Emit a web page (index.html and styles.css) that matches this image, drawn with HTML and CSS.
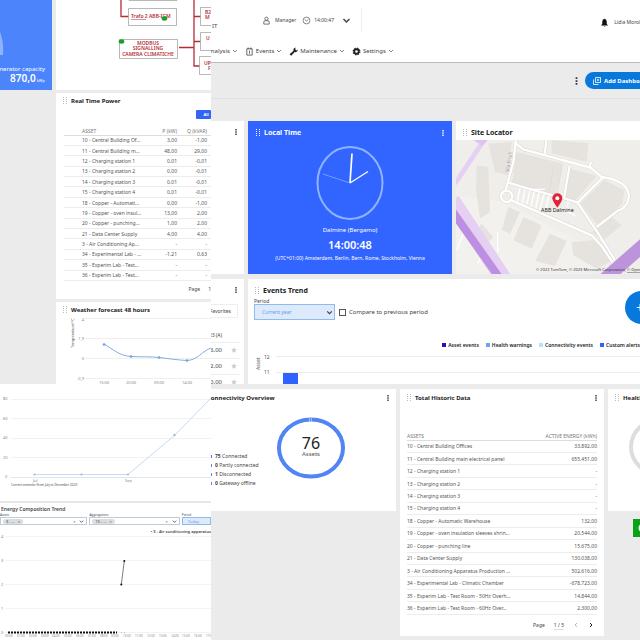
FILE: index.html
```html
<!DOCTYPE html>
<html lang="en">
<head>
<meta charset="utf-8">
<meta name="viewport" content="width=device-width, initial-scale=1">
<title>Energy dashboards</title>
<link rel="stylesheet" href="styles.css">
</head>
<body>
<svg class="defs" aria-hidden="true">
  <symbol id="grip" viewBox="0 0 4 8"><path d="M0 0h1v1H0zM3 0h1v1H3zM0 2h1v1H0zM3 2h1v1H3zM0 4h1v1H0zM3 4h1v1H3zM0 6h1v1H0zM3 6h1v1H3z" fill="currentColor"/></symbol>
  <symbol id="dots" viewBox="0 0 2 8"><path d="M.3 1h1.4v1.4H.3zM.3 3.3h1.4v1.4H.3zM.3 5.6h1.4V7H.3z" fill="currentColor"/></symbol>
  <symbol id="chev" viewBox="0 0 6 6"><path d="M1 2l2 2 2-2" fill="none" stroke="currentColor"/></symbol>
  <symbol id="star" viewBox="0 0 10 10"><path d="M5 .5l1.400 3 3.300.4-2.400 2.200.6 3.300L5 7.800 2.100 9.400l.6-3.300L.3 3.900l3.300-.4z" fill="#ccc"/></symbol>
</svg>
<main class="board">

  <section class="power">
    <article class="capacity">
      <svg class="capacity-arc" viewBox="0 0 52 90" aria-hidden="true"><path d="M0 32Q4 42 3 55H-4V32z" fill="#8db3fd"/></svg>
      <p>Generator capacity</p>
      <p class="capacity-value"><b>870,0</b> kWp</p>
    </article>
    <article class="card network">
      <svg viewBox="56 0 155 90" preserveAspectRatio="xMinYMin slice">
        <g fill="none" stroke="#b52c35" stroke-width="1.300"><path d="M121 0V16.500h8M199 0"/><path d="M194 0V66h6M194 16.500h7M194 41.500h7M179 47.500h15"/></g>
        <g fill="#fff" stroke="#999" stroke-width=".7"><path d="M129-6h48V.5h-48zM128.500 8.500h48v17h-48zM119.500 39.500h58v19h-58zM200.500-4.500H215v4h-14.500zM200.500 7.500H215v18h-14.500zM200.500 32.500H215v18h-14.500zM199.500 56.500H215v18h-15.500z"/></g>
        <g class="node-text"><text x="131" y="18">Trafo 2 ABB-IGM</text><text x="148" y="45" text-anchor="middle">MODBUS</text><text x="148" y="50" text-anchor="middle">SIGNALLING</text><text x="148" y="56" text-anchor="middle">CAMERA CLIMATICHE</text><text x="205" y="14">B2</text><text x="205" y="19">M</text><text x="206" y="40">U</text><text x="204" y="65">UP</text><text x="208" y="70">F</text></g>
        <path d="M131 19.500h15" stroke="#b52c35" stroke-width=".5"/>
        <g fill="#16a02c"><ellipse cx="164.500" cy="18.500" rx="2.800" ry="2.200"/><ellipse cx="121.500" cy="41.500" rx="2.800" ry="2.200"/></g>
      </svg>
    </article>
    <article class="card realtime">
      <header class="title"><svg class="grip"><use href="#grip"/></svg><h2>Real Time Power</h2></header>
      <div class="action"><button type="button">All</button></div>
      <table class="data">
        <thead><tr><th>ASSET</th><th>P (kW)</th><th>Q (kVAR)</th></tr></thead>
        <tbody>
          <tr><td>10 - Central Building Of...</td><td>3,00</td><td>-1,00</td></tr>
          <tr><td>11 - Central Building m...</td><td>48,00</td><td>29,00</td></tr>
          <tr><td>12 - Charging station 1</td><td>0,01</td><td>-0,01</td></tr>
          <tr><td>13 - Charging station 2</td><td>0,00</td><td>-0,01</td></tr>
          <tr><td>14 - Charging station 3</td><td>0,01</td><td>-0,01</td></tr>
          <tr><td>15 - Charging station 4</td><td>0,01</td><td>-0,01</td></tr>
          <tr><td>18 - Copper - Automati...</td><td>0,00</td><td>-1,00</td></tr>
          <tr><td>19 - Copper - oven insul...</td><td>13,00</td><td>2,00</td></tr>
          <tr><td>20 - Copper - punching...</td><td>1,00</td><td>2,00</td></tr>
          <tr><td>21 - Data Center Supply</td><td>4,00</td><td>4,00</td></tr>
          <tr><td>3 - Air Conditioning Ap...</td><td>-</td><td>-</td></tr>
          <tr><td>34 - Experimental Lab - ...</td><td>-1,21</td><td>0,63</td></tr>
          <tr><td>35 - Experim Lab - Test...</td><td>-</td><td>-</td></tr>
          <tr><td>36 - Experim Lab - Test...</td><td>-</td><td>-</td></tr>
        </tbody>
      </table>
      <footer class="pager"><span>Page</span><span>1</span></footer>
    </article>
    <article class="card weather">
      <header class="title"><svg class="grip"><use href="#grip"/></svg><h2>Weather forecast 48 hours</h2></header>
      <svg class="chart" viewBox="56 318 155 66" preserveAspectRatio="xMinYMin slice">
        <path d="M85 318.500h126M85 338.500h126M85 358.500h126M85 378.500h126" stroke="#e8e8e8" stroke-width=".7"/>
        <path d="M104 344C114 350 120 356 131 356.500S150 356.500 159 357.500S177 360 187 360.500C198 360 202 351 211 348" fill="none" stroke="#84aedd"/>
        <g fill="#6ea4e0"><circle cx="104" cy="344.500" r="1.300"/><circle cx="131" cy="356.500" r="1.300"/><circle cx="159" cy="357.500" r="1.300"/><circle cx="187" cy="360.500" r="1.300"/></g>
        <g class="tick"><text x="84" y="321" text-anchor="end">4</text><text x="84" y="340" text-anchor="end">1,9</text><text x="84" y="360" text-anchor="end">0</text><text x="84" y="380" text-anchor="end">-0,9</text><text x="104" y="384" text-anchor="middle">15:00</text><text x="131" y="384" text-anchor="middle">20:00</text><text x="159" y="384" text-anchor="middle">09:00</text><text x="187" y="384" text-anchor="middle">14:00</text></g>
        <text class="tick upright" x="74" y="348" transform="rotate(-90 74 348)">Temperature(°C)</text>
      </svg>
    </article>
  </section>

  <section class="main">
    <header class="top">
      <div class="account">
        <span class="lang">IT</span>
        <a href="#user" class="item user"><svg class="ico" viewBox="0 0 8 10"><circle cx="4" cy="3" r="1.800" fill="none" stroke="#444" stroke-width=".8"/><path d="M1 9V6.500Q1 5.300 2.300 5.300h3.400Q7 5.300 7 6.500V9z" fill="none" stroke="#444" stroke-width=".8"/></svg>Manager</a>
        <span class="item clock"><svg class="ico" viewBox="0 0 10 10"><circle cx="5" cy="5" r="3.800" fill="none" stroke="#444" stroke-width=".7"/><path d="M3 4l2 1.500L7 4" fill="none" stroke="#444" stroke-width=".7"/></svg>14:00:47</span>
        <button type="button" class="icon-button" aria-label="Open clock"><svg class="ico"><use href="#chev"/></svg></button>
        <span class="person"><svg class="ico" viewBox="0 0 10 12"><path d="M5 1Q8 1.500 8 5v3l1.500 1.500v.5h-9v-.5L2 8V5q0-3.500 3-4zM3.800 10.500h2.400Q5 12 3.800 10.500z" fill="#111"/></svg>Lidia Morolli</span>
      </div>
      <nav class="menu">
        <a href="#analysis">Analysis<svg class="down"><use href="#chev"/></svg></a>
        <a href="#events"><svg class="ico" viewBox="0 0 8 10"><path d="M1 2h6v7H1zM2.500 .5v2M5.500 .5v2M4 4v3.500" fill="none" stroke="#333" stroke-width=".8"/></svg>Events<svg class="down"><use href="#chev"/></svg></a>
        <a href="#maintenance"><svg class="ico" viewBox="0 0 8 8"><path d="M.5 6.500L4 3.300Q3.500 1 6 .5L5.500 2l1 1L8 2.500Q7.500 5 5 4.500L2 7.800z" fill="#222"/></svg>Maintenance<svg class="down"><use href="#chev"/></svg></a>
        <a href="#settings"><svg class="ico" viewBox="0 0 8 8"><circle cx="4" cy="4" r="2" fill="none" stroke="#222" stroke-width="1.600"/><circle cx="4" cy="4" r="3" fill="none" stroke="#222" stroke-dasharray="1.360 1"/></svg>Settings<svg class="down"><use href="#chev"/></svg></a>
      </nav>
    </header>
    <div class="toolbar">
      <button type="button" class="icon-button" aria-label="More"><svg class="kebab big"><use href="#dots"/></svg></button>
      <button type="button" class="add"><svg viewBox="0 0 8 8"><path d="M2.500.5h5v5h-5zM.5 2.500v5h5M5 1.800v2.400M3.800 3h2.400" fill="none" stroke="#fff" stroke-width=".8"/></svg>Add Dashboard</button>
    </div>
    <div class="tiles">
      <article class="card strip"><button type="button" class="icon-button" aria-label="More"><svg class="kebab"><use href="#dots"/></svg></button></article>
      <article class="time">
        <header class="title tall"><svg class="grip"><use href="#grip"/></svg><h2>Local Time</h2><button type="button" class="icon-button" aria-label="More"><svg class="kebab"><use href="#dots"/></svg></button></header>
        <svg class="dial" viewBox="0 0 68 76"><ellipse cx="34" cy="38" rx="32.500" ry="36" fill="none" stroke="#8db4ff" stroke-width="2"/><path d="M34 38L36 8.500" stroke="#fff" stroke-width="1.700"/><path d="M34 38l18-11.500" stroke="#fff" stroke-width="1.300"/><path d="M34 38L7 29" stroke="#8db4ff" stroke-width=".7"/></svg>
        <p>Dalmine (Bergamo)</p>
        <p class="now">14:00:48</p>
        <p class="zone">(UTC+01:00) Amsterdam, Berlin, Bern, Rome, Stockholm, Vienna</p>
      </article>
      <article class="card site">
        <header class="title tall"><svg class="grip"><use href="#grip"/></svg><h2>Site Locator</h2></header>
        <svg class="map" viewBox="33 64 552 405" preserveAspectRatio="xMinYMin slice">
          <path fill="#efeeea" d="M0 0h800v600H0z"/>
          <path fill="#f3f1ee" d="M33 230L180 250 500 420 430 469H33z"/>
          <g fill="#e6e3df"><path d="M130 75l70-5-10 100-40-10zM215 100l140 35-25 105-130-42zM375 150l80 22-65 75-30-12zM478 185l60 30-5 40-75 65-52-66zM95 140l35 5 5 135-30 20-12-90zM320 64l110 10-5 55-105-25zM190 265l35 15-30 65-25-12zM235 295l55 25-30 70-55-25zM315 345l50 22-35 75-60-15zM380 370l65-5 60 60-50 25-70-40zM440 340l60-45 30 25-55 45zM110 315l35 40-20 20-35-35z"/></g>
          <g fill="none" stroke="#dcd8d3" stroke-width="2"><path d="M326 140l-15 90M350 147l-15 90"/></g>
          <g fill="none" stroke="#dad6d1" stroke-width="10" stroke-linejoin="round"><path d="M213 64L205 130 181 218M208 70L235 92 440 148M304 64l-5 45M438 130l-5 18M438 148L470 175Q550 185 552 235 545 270 520 275L455 325M374 140l-17 98M190 192l60 18 110 30 38 12 78-78M398 252L460 345 510 425M200 245l240 105 30 32 40 60"/><circle cx="185" cy="233" r="17"/></g>
          <g fill="none" stroke="#fff" stroke-width="7" stroke-linejoin="round"><path d="M213 64L205 130 181 218M208 70L235 92 440 148M304 64l-5 45M438 130l-5 18M438 148L470 175Q550 185 552 235 545 270 520 275L455 325M374 140l-17 98M190 192l60 18 110 30 38 12 78-78M398 252L460 345 510 425M200 245l240 105 30 32 40 60"/><circle cx="185" cy="233" r="17"/></g>
          <g fill="none" stroke="#fff" stroke-width="4"><path d="M225 208l-8 40M240 212l-8 42M255 215l-10 43M268 218l-10 46M282 220l-10 50M298 225l-14 50M312 230l-12 50M250 212h50M158 340v60M54 345l-18 48M110 410l-12 25M360 275l30 15M370 250l-6 20"/></g>
          <g fill="none"><path d="M120 60L30 195" stroke="#e5cff5" stroke-width="14"/><path d="M85 64l45-2-18 20z" fill="#dfc2f2"/><path d="M20 245L175 480" stroke="#e5d0f3" stroke-width="50"/><path d="M20 275L165 480" stroke="#bd8fe2" stroke-width="24"/><path d="M475 485L600 375" stroke="#bc94dc" stroke-width="40"/></g>
          <text x="192" y="160" font-size="15" fill="#999" transform="rotate(-80 192 160)">Via Friuli</text>
          <path d="M337 267Q322 247 322 239a15 15 0 0 1 30 0q0 8-15 28z" fill="#df2438"/><circle cx="337" cy="239" r="6" fill="#fff"/>
          <text x="337" y="281" font-size="16" text-anchor="middle" fill="#222">ABB Dalmine</text>
          <text x="273" y="457" font-size="12" fill="#333">© 2022 TomTom, © 2023 Microsoft Corporation, <tspan text-decoration="underline">© OpenStreetMap</tspan></text>
        </svg>
      </article>
      <article class="card strip favorites">
        <button type="button" class="icon-button" aria-label="More"><svg class="kebab"><use href="#dots"/></svg></button>
        <button type="button" class="fav">Favorites</button>
        <table>
          <thead><tr><th>I3 (A)</th><th></th></tr></thead>
          <tbody><tr><td>16,00</td><td><svg><use href="#star"/></svg></td></tr><tr><td>12,00</td><td><svg><use href="#star"/></svg></td></tr><tr><td>10,00</td><td><svg><use href="#star"/></svg></td></tr></tbody>
        </table>
      </article>
      <article class="card events">
        <header class="title tall"><svg class="grip"><use href="#grip"/></svg><h2>Events Trend</h2></header>
        <label class="period-label" for="period">Period</label>
        <div class="filters">
          <span class="select"><select id="period"><option>Current year</option></select><svg><use href="#chev"/></svg></span>
          <label class="check"><input type="checkbox">Compare to previous period</label>
        </div>
        <ul class="legend"><li class="c1">Asset events</li><li class="c2">Health warnings</li><li class="c3">Connectivity events</li><li class="c4">Custom alerts</li></ul>
        <svg class="chart" viewBox="248 350 392 34" preserveAspectRatio="xMinYMin slice">
          <path d="M276 356.500h364M276 372.500h364" stroke="#eee"/><path d="M283 373h15v11h-15z" fill="#2f62ff"/>
          <g class="axis"><text x="264" y="359">12</text><text x="264" y="374">11</text><text x="260" y="370" transform="rotate(-90 260 370)">Asset</text></g>
        </svg>
        <button type="button" class="fab" aria-label="Add widget">+</button>
      </article>
    </div>
  </section>

  <section class="trends">
    <svg class="chart line" viewBox="0 384 211 117" preserveAspectRatio="xMinYMin slice">
      <path d="M11 399.500h200M11 418.500h200M11 438.500h200M11 457.500h200" stroke="#f2f2f2"/><path d="M11 477.500h200" stroke="#dfe6ef"/>
      <path d="M34 474.500h94L175 435 211 398" fill="none" stroke="#c9daf4"/>
      <g fill="#a8bad0"><circle cx="34.500" cy="474.500" r="1.100"/><circle cx="81.500" cy="474.500" r="1.100"/><circle cx="128" cy="474.500" r="1.100"/><circle cx="174.500" cy="435" r="1.200"/></g>
      <g class="tick"><text x="3" y="400">80</text><text x="3" y="420">60</text><text x="3" y="439">40</text><text x="3" y="459">20</text><text x="5" y="478">0</text><text x="33" y="482">Jul</text><text x="125" y="482">Sep</text></g>
      <text class="note" x="11" y="486">Current semester (from July to December 2022)</text>
    </svg>
    <article class="card energy">
      <h2>Energy Composition Trend</h2>
      <div class="combos">
        <div><span class="cap">Assets</span><div class="combo"><span class="chip">3 - ...<i>×</i></span><span class="end">×</span><svg><use href="#chev"/></svg></div></div>
        <div><span class="cap">Aggregations</span><div class="combo"><span class="chip">15 - ...<i>×</i></span><span class="end">×</span><svg><use href="#chev"/></svg></div></div>
        <div><label class="cap" for="range">Period</label><select id="range" class="range"><option>Today</option></select></div>
      </div>
      <p class="series">• 3 - Air conditioning apparatus</p>
      <svg class="chart" viewBox="0 534 211 106" preserveAspectRatio="xMinYMin slice">
        <path d="M5 536.500h206M5 560.500h206M5 584.500h206M5 608.500h206M5 632.500h206" stroke="#f3f3f3"/>
        <path d="M8 632.500h109" stroke="#111" stroke-width="2" stroke-dasharray="2 1"/><path d="M121 632.500h1M124 632.500h1" stroke="#9cc" stroke-width="1"/>
        <path d="M121.300 584.500L124.300 561" stroke="#444" stroke-width=".7"/><circle cx="121.300" cy="584.500" r="1" fill="#111"/><circle cx="124.300" cy="561" r="1" fill="#111"/>
        <g class="tick"><text x="1" y="538">4</text><text x="1" y="562">3</text><text x="1" y="586">2</text><text x="1" y="610">1</text><text x="1" y="634">0</text></g>
        <g class="tick hours"><text x="5" y="637">00:00</text><text x="17" y="637">01:00</text><text x="29" y="637">02:00</text><text x="41" y="637">03:00</text><text x="52" y="637">04:00</text><text x="64" y="637">05:00</text><text x="76" y="637">06:00</text><text x="88" y="637">07:00</text><text x="100" y="637">08:00</text><text x="111" y="637">09:00</text><text x="123" y="637">10:00</text><text x="135" y="637">11:00</text><text x="147" y="637">12:00</text><text x="159" y="637">13:00</text><text x="171" y="637">14:00</text><text x="182" y="637">15:00</text><text x="194" y="637">16:00</text><text x="206" y="637">17:00</text></g>
      </svg>
    </article>
  </section>

  <section class="overview">
    <article class="card connect">
      <header><h2>Connectivity Overview</h2><button type="button" class="icon-button" aria-label="More"><svg class="kebab"><use href="#dots"/></svg></button></header>
      <div class="connect-body">
        <ul><li><b>75</b> Connected</li><li><b>0</b> Partly connected</li><li><b>1</b> Disconnected</li><li><b>0</b> Gateway offline</li></ul>
        <svg class="donut" viewBox="0 0 70 62"><ellipse cx="35" cy="31" rx="32" ry="28.500" fill="none" stroke="#5185f5" stroke-width="4"/><path d="M33.500 0v5M35.500 0v5" stroke="#bcd" stroke-width=".8"/><text x="35" y="32" class="count" text-anchor="middle">76</text><text x="35" y="39" class="assets" text-anchor="middle">Assets</text></svg>
      </div>
    </article>
    <article class="card historic">
      <header class="title"><svg class="grip"><use href="#grip"/></svg><h2>Total Historic Data</h2><button type="button" class="icon-button" aria-label="More"><svg class="kebab"><use href="#dots"/></svg></button></header>
      <table class="data">
        <thead><tr><th>ASSETS</th><th>ACTIVE ENERGY (kWh)</th></tr></thead>
        <tbody>
          <tr><td>10 - Central Building Offices</td><td>33.892,00</td></tr>
          <tr><td>11 - Central Building main electrical panel</td><td>655.451,00</td></tr>
          <tr><td>12 - Charging station 1</td><td>-</td></tr>
          <tr><td>13 - Charging station 2</td><td>-</td></tr>
          <tr><td>14 - Charging station 3</td><td>-</td></tr>
          <tr><td>15 - Charging station 4</td><td>-</td></tr>
          <tr><td>18 - Copper - Automatic Warehouse</td><td>132,00</td></tr>
          <tr><td>19 - Copper - oven insulation sleeves shrin...</td><td>20.544,00</td></tr>
          <tr><td>20 - Copper - punching line</td><td>15.675,00</td></tr>
          <tr><td>21 - Data Center Supply</td><td>130.038,00</td></tr>
          <tr><td>3 - Air Conditioning Apparatus Production ...</td><td>502.616,00</td></tr>
          <tr><td>34 - Experimental Lab - Climatic Chamber</td><td>-678.723,00</td></tr>
          <tr><td>35 - Experim Lab - Test Room - 50Hz Overh...</td><td>14.844,00</td></tr>
          <tr><td>36 - Experim Lab - Test Room - 60Hz Over...</td><td>2.300,00</td></tr>
        </tbody>
      </table>
      <footer class="pager"><span>Page</span><span class="pages">1 / 5</span><button type="button" class="icon-button" disabled aria-label="Previous"><svg class="prev"><use href="#chev"/></svg></button><button type="button" class="icon-button" aria-label="Next"><svg class="next"><use href="#chev"/></svg></button></footer>
    </article>
    <div class="side">
      <article class="card health">
        <header class="title"><svg class="grip"><use href="#grip"/></svg><h2>Health Overview</h2></header>
        <svg class="ring" viewBox="0 0 70 62"><ellipse cx="35" cy="31" rx="32" ry="28.500" fill="none" stroke="#ddd" stroke-width="4"/></svg>
      </article>
      <button type="button" class="chat" aria-label="Chat"><svg viewBox="0 0 18 18"><circle cx="10" cy="9" r="4.500" fill="#fff"/></svg></button>
    </div>
  </section>
</main>
</body>
</html>
```
FILE: styles.css
```css
* { box-sizing: border-box; }
body { margin: 0; background: #ebebeb; color: #444; font: 5px/8px "Noto Sans", "Open Sans", sans-serif; }
h2, p, ul { margin: 0; padding: 0; }
ul { list-style: none; }
svg { display: block; flex: none; }
button, select, input { font: inherit; color: inherit; margin: 0; padding: 0; border: 0; background: none; }
a { color: inherit; text-decoration: none; }
table { border-collapse: collapse; }
h2 { font-size: 6px; font-weight: 700; line-height: 8px; color: #222; white-space: nowrap; }
.defs { position: absolute; width: 0; height: 0; }
.board { display: grid; grid-template: minmax(0, 3fr) minmax(0, 2fr) / minmax(0, 211fr) minmax(0, 429fr); height: 100vh; overflow: hidden; }
.board > section { min-width: 0; overflow: hidden; }
.card { background: #fff; min-width: 0; overflow: hidden; }
.grip { width: 4px; height: 8px; color: #bbb; }
.kebab { width: 2px; height: 8px; color: #333; }
.kebab.big { width: 3px; height: 10px; }
.icon-button { display: flex; align-items: center; flex: none; }
.title { display: flex; align-items: center; gap: 4px; height: 16px; padding: 0 7px; }
.title .icon-button { margin-left: auto; }
.title.tall { height: 24px; }
.title.tall h2 { font-size: 7px; }
.chart { width: 100%; }
.tick { font-size: 4px; fill: #888; }
.upright { fill: #555; }
.hours { font-size: 3px; }
.axis { font-size: 5px; fill: #555; }
.note { font-size: 3px; fill: #444; }

.power { display: grid; grid-template: 90px 206px 1fr / minmax(0, 52fr) minmax(0, 155fr); gap: 3px 4px; }
.capacity { position: relative; display: flex; flex-direction: column; align-items: flex-end; justify-content: flex-end; padding: 0 7px 4px 0; background: #4b84fb; color: #fff; white-space: nowrap; overflow: hidden; font-size: 6px; }
.capacity-arc { position: absolute; inset: 0; width: 100%; }
.capacity-value { font-size: 4px; line-height: 10px; }
.capacity b { font-size: 10px; font-weight: 600; }
.network svg { width: 100%; height: 100%; }
.node-text { font-size: 5px; fill: #b52c35; font-weight: 600; }
.realtime, .weather { grid-column: 2; }
.action { display: flex; justify-content: flex-end; height: 18px; }
.action button { width: 15px; height: 9px; margin-top: 1px; padding-left: 5px; background: #3264f8; color: #fff; font-size: 4px; font-weight: 700; border-radius: 1px; }
.data { color: #555; line-height: 6px; white-space: nowrap; }
.data th { height: 8px; padding: 0; font-weight: 400; font-size: 5px; color: #777; border-bottom: 1px solid #ddd; text-align: right; }
.data td { padding: 0; border-bottom: 1px solid #ececec; text-align: right; }
.data th:first-child, .data td:first-child { text-align: left; }
.realtime .data { width: calc(100% - 8px); height: 154px; margin-left: 8px; }
.realtime .data th:first-child, .realtime .data td:first-child { padding-left: 18px; }
.realtime .data th:last-child, .realtime .data td:last-child { padding-right: 4px; }
.realtime .data th:last-child { width: 34px; }
.pager { display: flex; align-items: center; justify-content: flex-end; gap: 8px; height: 16px; }

.main { display: flex; flex-direction: column; }
.top { height: 63px; background: #fff; border-bottom: 1px solid #bbb; white-space: nowrap; }
.account { display: flex; align-items: center; height: 40px; }
.lang { width: 51px; padding: 12px 0 0 1px; font-size: 6px; }
.item { display: flex; align-items: center; gap: 3px; margin-right: 6px; }
.user { gap: 4px; }
.ico { width: 9px; height: 9px; }
.account .icon-button { padding: 0 10px 0 2px; height: 24px; border-right: 1px solid #eee; }
.person { display: flex; align-items: center; gap: 5px; flex: none; margin-left: auto; margin-right: -3px; padding-top: 4px; }
.menu { display: flex; align-items: center; gap: 7px; height: 22px; margin-left: -4px; font-size: 6px; }
.menu a { display: flex; align-items: center; gap: 2px; }
.down { width: 6px; height: 6px; color: #888; }
.toolbar { display: flex; align-items: center; justify-content: flex-end; gap: 7px; height: 36px; flex: none; border-bottom: 1px solid #e0e0e0; }
.add { display: flex; align-items: center; gap: 3px; height: 17px; width: 65px; margin-right: -10px; padding-left: 8px; border-radius: 9px; background: #0878dc; color: #fff; font-size: 6px; font-weight: 700; white-space: nowrap; }
.add svg { width: 8px; height: 8px; }
.tiles { flex: 1; min-height: 0; display: grid; grid-template: 153px minmax(0, 1fr) / minmax(0, 33fr) minmax(0, 204fr) minmax(0, 184fr); gap: 5px 4px; padding-top: 22px; }
.strip { display: flex; flex-direction: column; align-items: flex-end; padding-top: 7px; }
.strip > .icon-button { margin-right: 7px; }
.time { display: flex; flex-direction: column; align-items: center; background: #3264ff; color: #fff; font-size: 6px; white-space: nowrap; min-width: 0; overflow: hidden; }
.time .title { align-self: stretch; padding: 0 8px; }
.time h2, .time .grip, .time .kebab { color: #fff; }
.dial { width: 68px; height: 76px; margin-bottom: 5px; }
.now { font-size: 11px; line-height: 22px; font-weight: 600; }
.zone { font-size: 5px; line-height: 4px; }
.site { display: flex; flex-direction: column; }
.site .title { height: 19px; padding-top: 5px; }
.map { width: 100%; flex: 1; min-height: 0; }
.fav { align-self: stretch; flex: none; height: 14px; margin: 10px 6px 0 -3px; border: 1px solid #eee; font-size: 5px; text-align: right; padding-right: 6px; }
.favorites table { width: 42px; margin: 11px 4px 0 0; font-size: 6px; white-space: nowrap; }
.favorites th, .favorites td { height: 16px; padding: 0; border-bottom: 1px solid #eee; font-weight: 400; text-align: right; }
.favorites th { height: 13px; }
.favorites td svg { width: 6px; height: 6px; margin-left: auto; margin-right: 3px; }
.favorites th:first-child { font-size: 5px; }
.favorites th:last-child { width: 18px; }
.events { grid-column: 2 / -1; position: relative; display: flex; flex-direction: column; }
.period-label { margin: -5px 0 0 6px; line-height: 6px; }
.filters { display: flex; align-items: center; gap: 4px; padding-left: 6px; font-size: 6px; }
.select { position: relative; width: 81px; }
.select select { appearance: none; width: 100%; height: 16px; padding: 0 7px; border: 1px solid #91bbec; background: #dceafb; color: #6a9ae8; font-size: 5px; }
.select svg { position: absolute; right: 2px; top: 5px; width: 7px; height: 7px; }
.check { display: flex; align-items: center; gap: 3px; white-space: nowrap; }
.check input { appearance: none; width: 7px; height: 7px; border: 1px solid #555; }
.legend { display: flex; justify-content: flex-end; gap: 7px; margin: 21px 0 1px; font-weight: 600; color: #222; white-space: nowrap; }
.legend li::before { content: ""; display: inline-block; width: 4px; height: 4px; margin-right: 2px; background: currentColor; }
.c1::before { color: #2b0fbe; }
.c2::before { color: #72a2f8; }
.c3::before { color: #bcdffa; }
.c4::before { color: #2f62ff; }
.fab { position: absolute; top: 12px; right: -18px; width: 33px; height: 33px; padding-right: 3px; border-radius: 50%; background: #0878dc; color: #fff; font-size: 14px; text-align: center; }

.trends { background: #fff; display: flex; flex-direction: column; }
.energy { border-top: 2px solid #e6e6e6; }
.energy h2 { padding: 2px 0 0 1px; font-size: 5px; font-weight: 600; color: #444; }
.combos { display: grid; grid-template-columns: minmax(0, 87fr) minmax(0, 90fr) minmax(0, 29fr); gap: 2px; }
.cap { display: block; font-size: 3px; line-height: 4px; }
.combo { display: flex; align-items: center; gap: 4px; height: 8px; padding: 0 2px; border: 1px solid #bcd; font-size: 4px; line-height: 5px; }
.combo .chip { margin-right: auto; padding: 0 3px; border-radius: 3px; background: #ddd; white-space: nowrap; }
.chip i { margin-left: 3px; font-style: normal; }
.combo svg { width: 5px; height: 5px; }
.range { appearance: none; display: block; width: 100%; height: 8px; padding-left: 5px; background: #dceafb; border: 1px solid #91bbec; color: #6a9ae8; font-size: 4px; }
.series { font-size: 4px; text-align: right; font-weight: 600; white-space: nowrap; line-height: 8px; margin-top: 3px; margin-bottom: -2px; }

.overview { display: grid; grid-template-columns: minmax(0, 185fr) minmax(0, 204fr) minmax(0, 32fr); gap: 4px; padding-top: 5px; align-items: start; }
.connect, .health { height: 122px; }
.connect header { display: flex; align-items: center; justify-content: space-between; height: 18px; margin-left: -4px; padding-right: 7px; }
.connect-body { display: flex; gap: 10px; }
.connect ul { width: 55px; padding-top: 45px; line-height: 9px; white-space: nowrap; }
.connect li::before { content: ""; display: inline-block; width: 1px; height: 3px; margin-right: 3px; background: #5185f5; }
.donut, .ring { width: 70px; height: 62px; margin-top: 10px; }
.count { font-size: 16px; fill: #222; }
.assets { font-size: 6px; fill: #555; }
.historic { height: 247px; }
.historic .title, .health .title { height: 18px; }
.historic .data { width: calc(100% - 14px); height: 183px; margin: 25px 7px 0; }
.historic .pager { height: 20px; padding: 0 10px 0 0; gap: 9px; }
.pages { border-bottom: 1px solid #ddd; }
.pager svg { width: 6px; height: 6px; }
.prev { transform: rotate(90deg); color: #bbb; }
.next { transform: rotate(-90deg); color: #222; }
.ring { margin: 9px 0 0 20px; }
.side { min-width: 0; overflow: hidden; }
.chat { display: block; width: 18px; height: 18px; margin: 8px 0 0 25px; background: #08a316; }
```
